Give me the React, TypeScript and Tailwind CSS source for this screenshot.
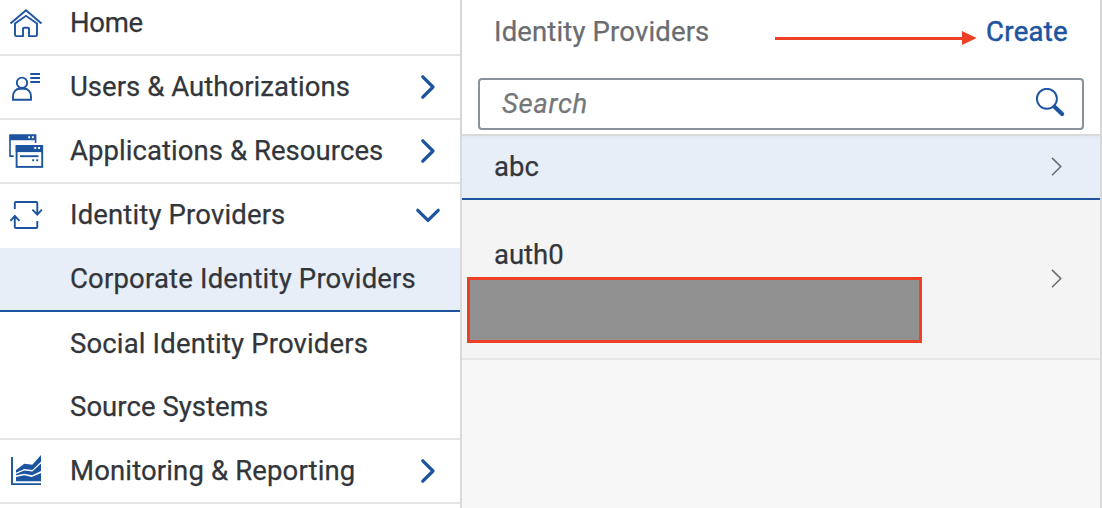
import React, { type ReactNode } from 'react';

function RowIcon({ children }: { children: ReactNode }) {
  return (
    <svg className="h-9 w-9 shrink-0 text-[#1d549f]" viewBox="0 0 36 36" fill="none" stroke="currentColor" strokeWidth="1.9">
      {children}
    </svg>
  );
}

const HomeIcon = () => (
  <RowIcon>
    <path d="M2.5 18.4 18 5.3l15.5 13.1" />
    <path d="M7 18.6V29.8q0 1.3 1.3 1.3H15V23.6q0-.9.9-.9h4.2q.9 0 .9.9v7.5h6.7q1.3 0 1.3-1.3V18.6L18 10.8Z" />
  </RowIcon>
);

const UsersIcon = () => (
  <RowIcon>
    <circle cx="14" cy="13.8" r="5.2" />
    <path d="M5 30.8V27.5C5 23 8 19.8 11.5 19.8h5C20 19.8 23 23 23 27.5v3.3Z" />
    <path d="M22.3 5h9.7M22.3 9H32M22.3 13H32" />
  </RowIcon>
);

const AppsIcon = () => (
  <RowIcon>
    <path d="M1.2 1.3h27.2v8.8h-1.6V7.3H2.8v15h2.9v1.7H1.2Z" fill="currentColor" stroke="none" />
    <path d="M20.2 3.3h1.9v1.9h-1.9ZM23.9 3.3h1.9v1.9h-1.9Z" fill="white" stroke="none" />
    <rect x="8.6" y="13" width="25.6" height="20.9" />
    <path d="M7.7 12.2h27.3v6.9H7.7Z" fill="currentColor" stroke="none" />
    <path d="M26.3 14h1.9v1.9h-1.9ZM30.1 14H32v1.9h-1.9Z" fill="white" stroke="none" />
    <path d="M12 23.2h18.5" />
    <path d="M24.2 26.3h1.9v1.9h-1.9ZM28.3 26.3h1.9v1.9h-1.9Z" fill="currentColor" stroke="none" />
  </RowIcon>
);

const SyncIcon = () => (
  <RowIcon>
    <path d="M6.8 12V6q0-1 1-1h20.5q1 0 1 1v11.3M24.4 12.7l4.9 4.9 4.6-4.9" />
    <path d="M6.8 19v11q0 1 1 1h20.5q1 0 1-1v-6M2.4 23.8l4.4-4.8 4.7 4.8" />
  </RowIcon>
);

const ChartIcon = () => (
  <RowIcon>
    <path d="M4 4v27.1h29" />
    <g fill="currentColor" stroke="none">
      <path d="m8 17 8.3-6.3 8 1L33 2v6.7L24.3 17l-8-1L8 19.7Z" />
      <path d="m8 21 8.3-3.5 8 1.1 8.7-8.2V18l-8.7 4.3-8-1.6L8 22.3Z" />
      <path d="m8 24 8.3-1.7 7.4 1.7 9.3-4v8.3H8Z" />
    </g>
  </RowIcon>
);

function Expander({ open = false }: { open?: boolean }) {
  return (
    <svg className="mr-[18px] ml-auto h-7 w-7 shrink-0 text-[#1d549f]" viewBox="0 0 28 28" fill="none" stroke="currentColor" strokeWidth="3.3" strokeLinecap="round" strokeLinejoin="round">
      <path d={open ? 'M3.8 9.3 14 19.4 24.2 9.3' : 'M8.8 3.8 19 14 8.8 24.2'} />
    </svg>
  );
}

function NavRow({ icon, label, tracking, trailing, tone = 'border-[#e5e5e5]' }: { icon?: ReactNode; label: string; tracking: string; trailing?: ReactNode; tone?: string }) {
  return (
    <li className={`flex h-16 items-center border-b-2 pl-2 ${tone}`}>
      <span className="w-[62px] shrink-0">{icon}</span>
      <span className={`whitespace-nowrap ${tracking}`}>{label}</span>
      {trailing}
    </li>
  );
}

const ItemArrow = () => (
  <svg className="ml-auto h-6 w-6 shrink-0" viewBox="0 0 24 24" fill="none" stroke="#6a6d70" strokeWidth="1.5">
    <path d="m8 2.9 8.8 8.7L8 20.3" />
  </svg>
);

export default function App() {
  return (
    <div className="flex h-[508px] w-[1102px] overflow-hidden bg-white font-['Roboto',sans-serif] text-[27.5px] leading-8 text-[#32363a] [-webkit-text-stroke:0.25px]">
      <nav className="w-[462px] shrink-0 border-r-2 border-[#d9d9d9]">
        <ul className="-mt-2">
          <NavRow icon={<HomeIcon />} label="Home" tracking="tracking-[-0.3px]" />
          <NavRow icon={<UsersIcon />} label="Users & Authorizations" tracking="tracking-[0.04px]" trailing={<Expander />} />
          <NavRow icon={<AppsIcon />} label="Applications & Resources" tracking="tracking-[0.06px]" trailing={<Expander />} />
          <NavRow icon={<SyncIcon />} label="Identity Providers" tracking="tracking-[0.15px]" trailing={<Expander open />} tone="border-transparent" />
          <NavRow label="Corporate Identity Providers" tracking="tracking-[0.18px]" tone="border-[#1d549f] bg-[#e7eef8]" />
          <NavRow label="Social Identity Providers" tracking="tracking-[0.15px] pt-0.5" tone="border-transparent" />
          <NavRow label="Source Systems" tracking="tracking-[0.05px]" />
          <NavRow icon={<ChartIcon />} label="Monitoring & Reporting" tracking="tracking-[0.14px]" trailing={<Expander />} />
        </ul>
      </nav>
      <main className="relative flex grow flex-col border-r-2 border-[#d9d9d9] bg-[#f7f7f7]">
        <header className="z-10 h-[136px] shrink-0 border-b-2 border-[#d9d9d9] bg-white px-4 pt-4 shadow-[0_1px_4px_rgba(0,0,0,0.04)]">
          <div className="flex h-[62px] items-start justify-between px-4">
            <h1 className="tracking-[0.15px] text-[#6a6d70]">Identity Providers</h1>
            <button className="tracking-[0.3px] text-[#1d549f] [-webkit-text-stroke:0.5px]">Create</button>
          </div>
          <label className="flex h-[52px] items-center rounded-[4px] border-2 border-[#89919a] pr-4 pl-[22px]">
            <span className="tracking-[0.65px] text-[#74777a] italic">Search</span>
            <svg className="ml-auto h-8 w-8 text-[#1d549f]" viewBox="0 0 32 32" fill="none" stroke="currentColor">
              <circle cx="12.9" cy="10.8" r="10" strokeWidth="1.9" />
              <path d="m20.5 18.7 7.6 7.3" strokeWidth="4.2" strokeLinecap="round" />
            </svg>
          </label>
        </header>
        <ul>
          <li className="flex h-16 items-center border-b-2 border-[#1d549f] bg-[#e7eef8] pr-8 pl-8">
            <span>abc</span>
            <ItemArrow />
          </li>
          <li className="relative flex h-40 items-center border-b-2 border-[#e5e5e5] bg-[#f4f4f4] pr-8 pl-8">
            <span className="self-start pt-[39px]">auth0</span>
            <ItemArrow />
            <div className="absolute top-[77px] left-[5px] h-[66px] w-[455px] border-3 border-[#ee4026] bg-[#919191]" />
          </li>
        </ul>
        <svg className="absolute top-[30px] left-[313px] z-20 h-4 w-[203px]" viewBox="0 0 203 16" fill="#ee4026">
          <path d="M0 7h187V1l14.7 7L187 15v-5H0Z" />
        </svg>
      </main>
    </div>
  );
}
